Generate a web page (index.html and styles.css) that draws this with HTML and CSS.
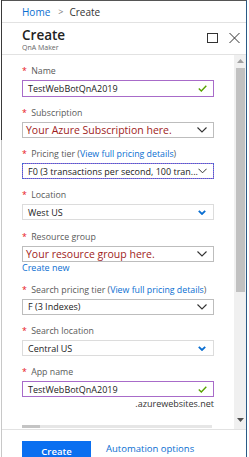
FILE: index.html
```html
<!DOCTYPE html>
<html lang="en">
<head>
  <meta charset="UTF-8" />
  <meta name="viewport" content="width=device-width, initial-scale=1.0"/>
  <title>Create - QnA Maker</title>
  <link rel="stylesheet" href="styles.css">
</head>
<body>
  <div class="frame">
    <div class="edge"></div>
    <div class="blade">
      <div class="crumbs">
        <a href="#" class="crumb-link">Home</a>
        <span class="crumb-sep">&gt;</span>
        <span class="crumb-here">Create</span>
      </div>

      <div class="head">
        <div class="head-text">
          <h1>Create</h1>
          <div class="sub">QnA Maker</div>
        </div>
        <div class="head-icons">
          <svg width="11" height="10" viewBox="0 0 11 10"><rect x="0.5" y="0.5" width="10" height="9" fill="none" stroke="#333" stroke-width="1"/></svg>
          <svg width="11" height="10" viewBox="0 0 11 10"><path d="M0.5 0 L10.5 10 M10.5 0 L0.5 10" stroke="#333" stroke-width="1"/></svg>
        </div>
      </div>

      <div class="body">
        <div class="pane">
          <div class="form">
            <div class="field">
              <label><span class="req">*</span> Name</label>
              <div class="input tall focused">
                <span class="val">TestWebBotQnA2019</span>
                <svg class="check" width="9" height="7" viewBox="0 0 9 7"><path d="M0.8 3.6 L3.3 6 L8.3 0.8" fill="none" stroke="#57a300" stroke-width="1.4"/></svg>
              </div>
            </div>

            <div class="field">
              <label><span class="req">*</span> Subscription</label>
              <div class="input">
                <span class="val note">Your Azure Subscription here.</span>
                <svg class="chev" width="10" height="6" viewBox="0 0 10 6"><path d="M0.5 0.5 L5 5 L9.5 0.5" fill="none" stroke="#333" stroke-width="1.1"/></svg>
              </div>
            </div>

            <div class="field">
              <label><span class="req">*</span> Pricing tier (<a href="#">View full pricing details</a>)</label>
              <div class="input focused dotted">
                <span class="val">F0 (3 transactions per second, 100 tran...</span>
                <svg class="chev" width="10" height="6" viewBox="0 0 10 6"><path d="M0.5 0.5 L5 5 L9.5 0.5" fill="none" stroke="#333" stroke-width="1.1"/></svg>
              </div>
            </div>

            <div class="field">
              <label><span class="req">*</span> Location</label>
              <div class="input light">
                <span class="val">West US</span>
                <svg class="chev blue" width="8" height="5" viewBox="0 0 8 5"><path d="M0.8 0.8 L4 4 L7.2 0.8" fill="none" stroke="#0a6ed1" stroke-width="1.8"/></svg>
              </div>
            </div>

            <div class="field">
              <label><span class="req">*</span> Resource group</label>
              <div class="input">
                <span class="val note">Your resource group here.</span>
                <svg class="chev" width="10" height="6" viewBox="0 0 10 6"><path d="M0.5 0.5 L5 5 L9.5 0.5" fill="none" stroke="#333" stroke-width="1.1"/></svg>
              </div>
              <a href="#" class="create-new">Create new</a>
            </div>

            <div class="field">
              <label><span class="req">*</span> Search pricing tier (<a href="#">View full pricing details</a>)</label>
              <div class="input">
                <span class="val">F (3 Indexes)</span>
                <svg class="chev" width="10" height="6" viewBox="0 0 10 6"><path d="M0.5 0.5 L5 5 L9.5 0.5" fill="none" stroke="#333" stroke-width="1.1"/></svg>
              </div>
            </div>

            <div class="field">
              <label><span class="req">*</span> Search location</label>
              <div class="input light">
                <span class="val">Central US</span>
                <svg class="chev blue" width="8" height="5" viewBox="0 0 8 5"><path d="M0.8 0.8 L4 4 L7.2 0.8" fill="none" stroke="#0a6ed1" stroke-width="1.8"/></svg>
              </div>
            </div>

            <div class="field">
              <label><span class="req">*</span> App name</label>
              <div class="input focused">
                <span class="val">TestWebBotQnA2019</span>
                <svg class="check" width="9" height="7" viewBox="0 0 9 7"><path d="M0.8 3.6 L3.3 6 L8.3 0.8" fill="none" stroke="#57a300" stroke-width="1.4"/></svg>
              </div>
              <div class="suffix">.azurewebsites.net</div>
            </div>
          </div>

          <div class="hscroll"><div class="hthumb"></div></div>
        </div>

        <div class="vscroll">
          <div class="arrow"><svg width="7" height="4" viewBox="0 0 7 4"><path d="M0 4 L3.5 0 L7 4 Z" fill="#a0a0a0"/></svg></div>
          <div class="vthumb"></div>
          <div class="vgap"></div>
          <div class="arrow"><svg width="7" height="4" viewBox="0 0 7 4"><path d="M0 0 L3.5 4 L7 0 Z" fill="#505050"/></svg></div>
        </div>
      </div>

      <div class="foot">
        <button class="btn">Create</button>
        <a href="#" class="auto-link">Automation options</a>
      </div>
    </div>
  </div>
</body>
</html>
```

FILE: styles.css
```css
* {
  margin: 0;
  padding: 0;
  box-sizing: border-box;
  font-family: 'Open Sans', 'Noto Sans', sans-serif;
}

body {
  width: 249px;
  height: 457px;
  overflow: hidden;
  background-color: #ffffff;
}

a {
  color: #0a6ed1;
  text-decoration: none;
}

.frame {
  display: flex;
  height: 457px;
}

.edge {
  width: 1px;
  margin-left: 1px;
  background: linear-gradient(#3a3a3a 140px, #c8c8c8 140px);
}

.blade {
  width: 245px;
  height: 457px;
  border-top: 1px solid #555;
  border-right: 1px solid #2b5a86;
  display: flex;
  flex-direction: column;
}

.crumbs {
  height: 22px;
  flex-shrink: 0;
  border-bottom: 1px solid #e2e2e2;
  padding-left: 20px;
  display: flex;
  align-items: center;
  font-size: 10px;
  color: #333;
}

.crumb-sep {
  margin: 0 6px 0 8px;
  color: #777;
  font-size: 9px;
}

.head {
  height: 32px;
  flex-shrink: 0;
  border-bottom: 1px solid #e2e2e2;
  padding: 4px 0 0 20px;
  display: flex;
  justify-content: space-between;
}

.head h1 {
  font-size: 13.5px;
  font-weight: 600;
  color: #222;
  line-height: 16px;
}

.sub {
  font-size: 7px;
  color: #666;
  line-height: 9px;
}

.head-icons {
  display: flex;
  gap: 11px;
  padding: 6px 6px 0 0;
}

.body {
  height: 374px;
  flex-shrink: 0;
  display: flex;
}

.pane {
  width: 232px;
  display: flex;
  flex-direction: column;
}

.form {
  flex-grow: 1;
  padding: 9.5px 20px 0 20px;
}

.field {
  margin-bottom: 10.25px;
}

.field label {
  display: block;
  font-size: 8.8px;
  line-height: 12px;
  color: #5a5a5a;
  margin-bottom: 3px;
  white-space: nowrap;
}

.req {
  color: #e81123;
  margin-right: 2px;
}

.input {
  height: 16px;
  border: 1px solid #bdbdbd;
  display: flex;
  align-items: center;
  justify-content: space-between;
  padding: 0 6px 0 5px;
}

.input.tall {
  height: 17px;
}

.input.light {
  border-color: #dcdcdc;
}

.input.focused {
  border-color: #a86bc9;
}

.input.dotted {
  outline: 1px dotted #3f68d8;
  outline-offset: -1px;
}

.val {
  font-size: 9px;
  color: #222;
  white-space: nowrap;
}

.val.note {
  font-size: 10.5px;
  color: #a01c22;
  margin-left: -2px;
}

.chev.blue {
  margin-right: 1px;
}

.create-new {
  display: block;
  font-size: 9px;
  line-height: 12px;
}

.suffix {
  text-align: right;
  font-size: 9px;
  line-height: 12px;
  color: #333;
  margin-top: 1px;
}

.hscroll {
  height: 3px;
  flex-shrink: 0;
  margin: 0 22px 1px 20px;
  background-color: #e6e6e6;
}

.hthumb {
  width: 18px;
  height: 3px;
  background-color: #c4c4c4;
}

.vscroll {
  width: 12px;
  background-color: #f0f0f0;
  display: flex;
  flex-direction: column;
  padding-bottom: 3px;
}

.arrow {
  height: 12px;
  display: flex;
  align-items: center;
  justify-content: center;
}

.vthumb {
  height: 224px;
  margin: 1px 1px 0 2px;
  background-color: #c1c1c1;
}

.vgap {
  flex-grow: 1;
}

.foot {
  height: 28px;
  flex-shrink: 0;
  overflow: hidden;
  border-top: 1px solid #e2e2e2;
  padding: 11px 0 0 20px;
  display: flex;
  align-items: flex-start;
  gap: 15px;
}

.btn {
  width: 69px;
  height: 20px;
  flex-shrink: 0;
  background-color: #0a6ff0;
  color: white;
  border: none;
  font-size: 9.5px;
  font-weight: 600;
}

.auto-link {
  font-size: 9.5px;
  line-height: 16px;
}
```
